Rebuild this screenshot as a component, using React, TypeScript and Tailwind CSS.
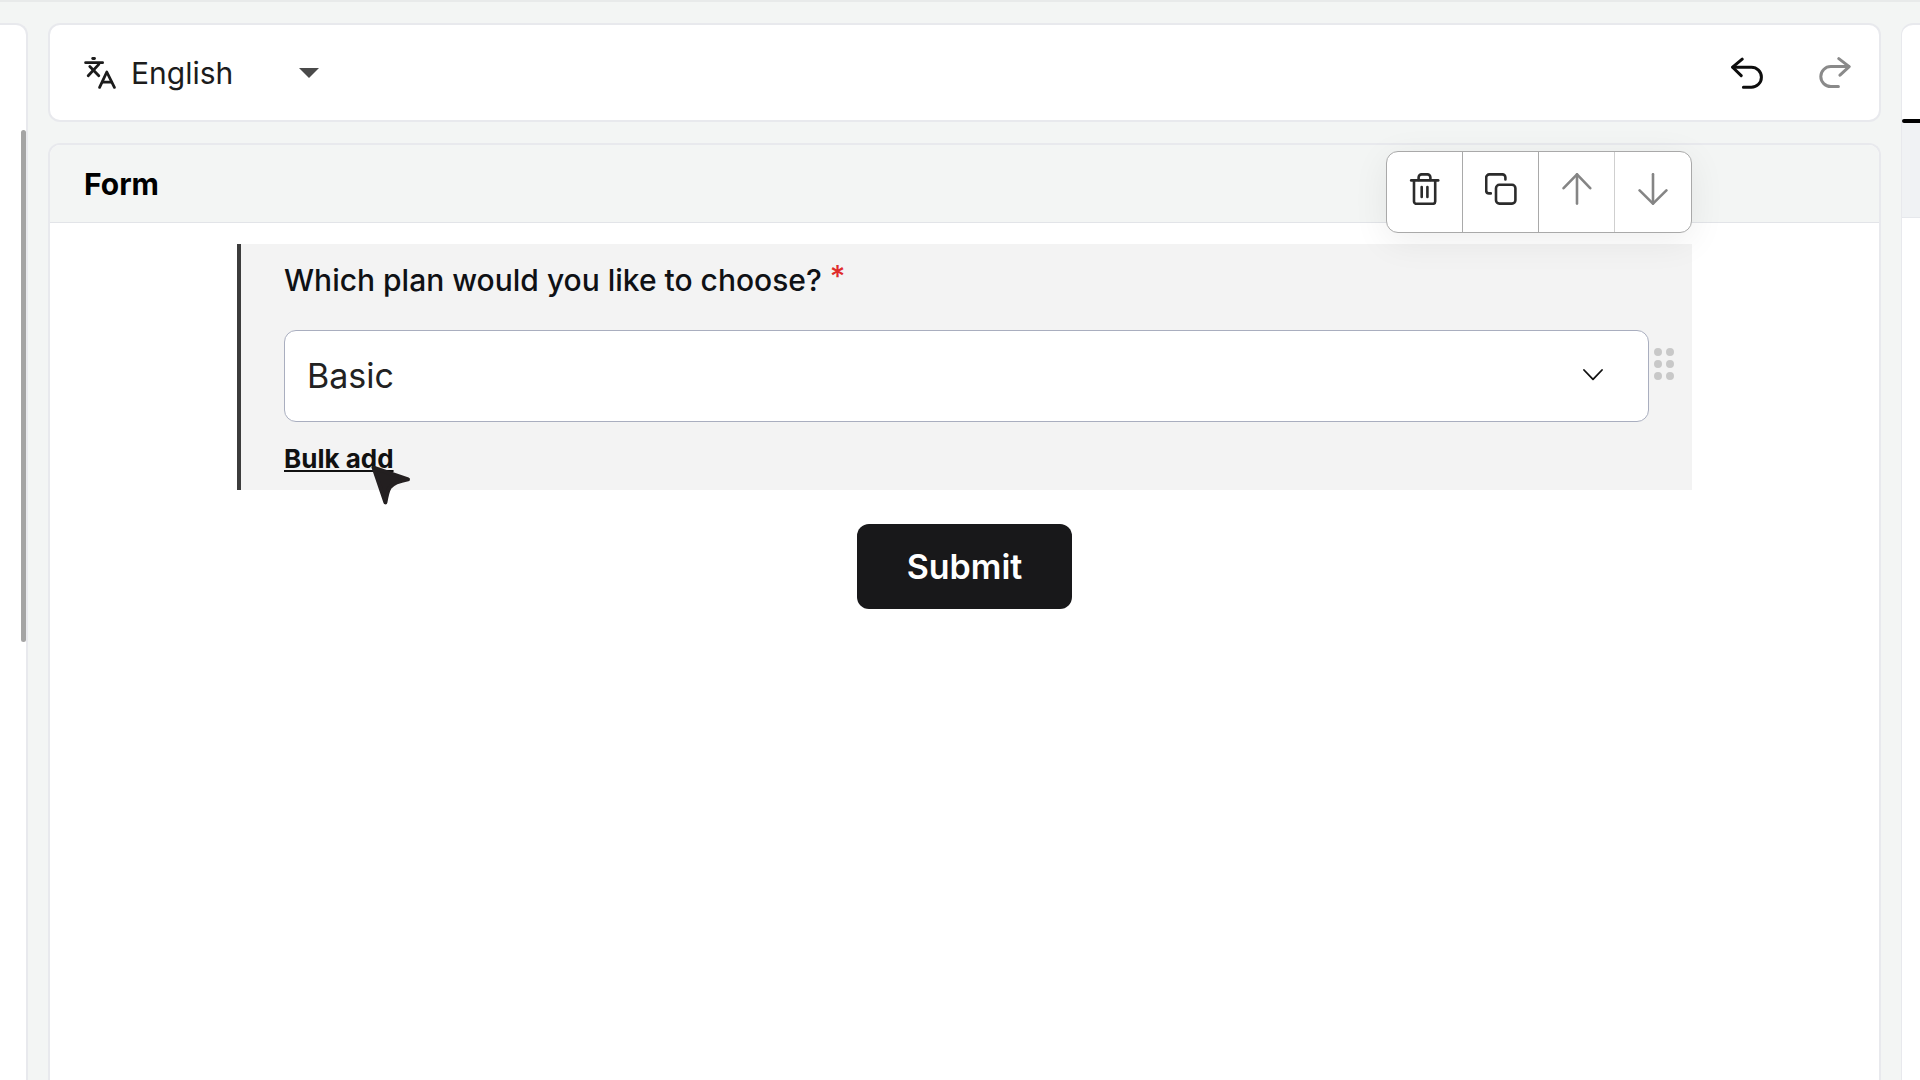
import { useState } from "react";

type IconProps = { className?: string };

function TranslateIcon({ className }: IconProps) {
  return (
    <svg
      viewBox="0 0 32 32"
      fill="none"
      stroke="currentColor"
      strokeWidth="2.8"
      strokeLinecap="round"
      strokeLinejoin="round"
      className={className}
    >
      <path d="M8.7 1.5h1.8" />
      <path d="M1.6 5.7h17" />
      <path d="M4.2 18.8 14.8 7.4" />
      <path d="m5.8 9.6 9 9.2" />
      <path d="M15.6 30.4 22.8 15l7.6 15.4" />
      <path d="M18.4 25.2h9" />
    </svg>
  );
}

function UndoIcon({ className }: IconProps) {
  return (
    <svg
      viewBox="0 0 32 32"
      fill="none"
      stroke="currentColor"
      strokeWidth="3"
      strokeLinecap="round"
      strokeLinejoin="round"
      className={className}
    >
      <path d="M11.2 2.2 1.6 10.2l8.6 8.4" />
      <path d="M2 10.2h18.4a10 10 0 0 1 0 20h-8" />
    </svg>
  );
}

function RedoIcon({ className }: IconProps) {
  return (
    <svg
      viewBox="0 0 32 32"
      fill="none"
      stroke="currentColor"
      strokeWidth="3"
      strokeLinecap="round"
      strokeLinejoin="round"
      className={className}
    >
      <path d="m19.8 1.6 10.4 8-9.2 8.6" />
      <path d="M29.6 9.6H11.8a10 10 0 0 0 0 20h7.6" />
    </svg>
  );
}

function TrashIcon({ className }: IconProps) {
  return (
    <svg
      viewBox="0 0 32 32"
      fill="none"
      stroke="currentColor"
      strokeWidth="2.6"
      strokeLinecap="round"
      strokeLinejoin="round"
      className={className}
    >
      <path d="M2.2 7.4h27" />
      <path d="M9.6 7V4.4a3 3 0 0 1 3-3h5.8a3 3 0 0 1 3 3V7" />
      <path d="M5 7.6v21a2.2 2.2 0 0 0 2.2 2.2H24a2.2 2.2 0 0 0 2.2-2.2v-21" />
      <path d="M12.7 14v10M18.4 14v10" />
    </svg>
  );
}

function CopyIcon({ className }: IconProps) {
  return (
    <svg
      viewBox="0 0 32 32"
      fill="none"
      stroke="currentColor"
      strokeWidth="2.6"
      strokeLinecap="round"
      strokeLinejoin="round"
      className={className}
    >
      <rect x="11" y="11.8" width="19.4" height="18.8" rx="3.4" />
      <path d="M5.8 20.4H4a2.8 2.8 0 0 1-2.8-2.8V4.6A3.2 3.2 0 0 1 4.4 1.4h13a3 3 0 0 1 3 3v2" />
    </svg>
  );
}

function ArrowUpIcon({ className }: IconProps) {
  return (
    <svg
      viewBox="0 0 32 32"
      fill="none"
      stroke="currentColor"
      strokeWidth="2.6"
      strokeLinecap="round"
      strokeLinejoin="round"
      className={className}
    >
      <path d="M16 30.6V1.4" />
      <path d="M2.6 15.2 16 1.4l13.2 13.8" />
    </svg>
  );
}

function ArrowDownIcon({ className }: IconProps) {
  return (
    <svg
      viewBox="0 0 32 32"
      fill="none"
      stroke="currentColor"
      strokeWidth="2.6"
      strokeLinecap="round"
      strokeLinejoin="round"
      className={className}
    >
      <path d="M16 1.2v29.4" />
      <path d="M2.6 17.4 16 30.6l13.4-13.2" />
    </svg>
  );
}

function DragDots({ className }: IconProps) {
  return (
    <svg viewBox="0 0 20 32" fill="currentColor" className={className}>
      {[4, 16].map((cx) =>
        [4, 16, 28].map((cy) => (
          <circle key={`${cx}-${cy}`} cx={cx} cy={cy} r="4" />
        ))
      )}
    </svg>
  );
}

function Pointer({ className }: IconProps) {
  return (
    <svg
      viewBox="0 0 40 40"
      fill="#231f20"
      stroke="#231f20"
      strokeWidth="4"
      strokeLinejoin="round"
      className={className}
    >
      <path d="M2.6 2.6 37 14.4 Q23 17 18.6 22.6 Q16.4 26 14.4 37.4 Z" />
    </svg>
  );
}

const tools = [
  { label: "Delete", Icon: TrashIcon, color: "text-[#2b2b2b]", line: "border-[#a9a9a9]" },
  { label: "Duplicate", Icon: CopyIcon, color: "text-[#2b2b2b]", line: "border-[#a9a9a9]" },
  { label: "Move up", Icon: ArrowUpIcon, color: "text-[#858585]", line: "border-[#cfcfcf]" },
  { label: "Move down", Icon: ArrowDownIcon, color: "text-[#858585]", line: "border-transparent" },
];

export default function App() {
  const [language, setLanguage] = useState("English");
  const [plan, setPlan] = useState("Basic");

  return (
    <div className="flex min-h-screen gap-5 overflow-hidden border-t-2 border-[#e8eaea] bg-[#f3f5f4] pt-[21px] font-['Inter',sans-serif] text-[#1c1c1c]">
      <aside className="relative w-7 shrink-0 rounded-tr-xl border-t-2 border-r-2 border-[#e8e9ed] bg-white">
        <div className="absolute top-[105px] right-0 h-[512px] w-[5px] rounded-full bg-[#a4a4a4]" />
      </aside>

      <main className="flex min-w-0 flex-1 flex-col gap-[21px]">
        <header className="flex h-[99px] shrink-0 items-center justify-between rounded-xl border-2 border-[#e8e9ed] bg-white pr-7 pl-[34px]">
          <div className="relative flex items-center">
            <TranslateIcon className="size-8" />
            <select
              aria-label="Language"
              value={language}
              onChange={(e) => setLanguage(e.target.value)}
              className="w-[203px] cursor-pointer appearance-none bg-transparent pl-[15px] text-[30px] leading-9"
            >
              <option>English</option>
              <option>Deutsch</option>
              <option>Français</option>
            </select>
            <svg
              viewBox="0 0 20 10"
              fill="#4a4a4a"
              className="pointer-events-none absolute right-0 h-[10px] w-5"
            >
              <path d="M0 0h20L10 10z" />
            </svg>
          </div>
          <div className="flex items-center gap-14">
            <button type="button" aria-label="Undo" className="text-[#0d0d0d]">
              <UndoIcon className="size-8" />
            </button>
            <button type="button" aria-label="Redo" className="text-[#8a8a8a]">
              <RedoIcon className="size-8" />
            </button>
          </div>
        </header>

        <section className="flex flex-1 flex-col rounded-t-xl border-2 border-b-0 border-[#e8e9ed] bg-white">
          <div className="flex h-[78px] items-center rounded-t-[10px] border-b border-[#e2e4e8] bg-[#f3f5f4] px-[34px]">
            <h1 className="text-[30px] leading-9 font-bold text-black">Form</h1>
          </div>

          <form
            onSubmit={(e) => e.preventDefault()}
            className="flex flex-col items-center gap-[34px] px-[187px] pt-[21px]"
          >
            <div className="relative w-full border-l-4 border-[#3c3c3c] bg-[#f3f3f3] pt-[18px] pr-[43px] pb-[15px] pl-[43px]">
              <label
                htmlFor="plan"
                className="block text-[30px] leading-9 font-medium text-[#0f1115]"
              >
                Which plan would you like to choose?{" "}
                <span className="inline-block -translate-y-1 text-[#e02b2b]">*</span>
              </label>

              <div className="relative mt-8">
                <select
                  id="plan"
                  value={plan}
                  onChange={(e) => setPlan(e.target.value)}
                  className="block h-[92px] w-full cursor-pointer appearance-none rounded-xl border border-[#a9aebf] bg-white px-[22px] pb-0.5 text-[34px] text-[#222222]"
                >
                  <option>Basic</option>
                  <option>Standard</option>
                  <option>Premium</option>
                </select>
                <svg
                  viewBox="0 0 20 12"
                  fill="none"
                  stroke="#111111"
                  strokeWidth="1.8"
                  strokeLinecap="round"
                  strokeLinejoin="round"
                  className="pointer-events-none absolute top-[39px] right-[46px] h-3 w-5"
                >
                  <path d="m1 1 9 9.4L19 1" />
                </svg>
                <DragDots className="absolute top-[18px] -right-[25px] h-8 w-5 cursor-grab text-[#c8c8c8]" />
              </div>

              <div className="relative mt-[21px] w-fit">
                <a
                  href="#bulk-add"
                  className="block text-[26px] leading-8 font-bold text-[#111111] underline decoration-2 underline-offset-2"
                >
                  Bulk add
                </a>
                <Pointer className="pointer-events-none absolute top-[22px] left-[87px] size-10" />
              </div>

              <div className="absolute -top-[93px] right-0 grid w-[306px] grid-cols-4 overflow-hidden rounded-xl border border-[#a9a9a9] bg-white shadow-[0_8px_36px_rgba(0,0,0,0.07)]">
                {tools.map(({ label, Icon, color, line }) => (
                  <button
                    key={label}
                    type="button"
                    aria-label={label}
                    className={`flex h-20 items-center justify-center border-r pb-1.5 last:border-r-0 ${color} ${line}`}
                  >
                    <Icon className="size-8" />
                  </button>
                ))}
              </div>
            </div>

            <button
              type="submit"
              className="h-[85px] rounded-xl bg-[#18181a] px-[50px] text-[34px] font-semibold text-white"
            >
              Submit
            </button>
          </form>
        </section>
      </main>

      <aside className="flex w-[19px] shrink-0 flex-col rounded-tl-xl border-t-2 border-l border-[#e8e9ed] bg-white">
        <div className="h-[94px]" />
        <div className="h-1 rounded-l-full bg-black" />
        <div className="h-[95px] border-b border-[#e6e8ec] bg-[#f0f2f4]" />
      </aside>
    </div>
  );
}
